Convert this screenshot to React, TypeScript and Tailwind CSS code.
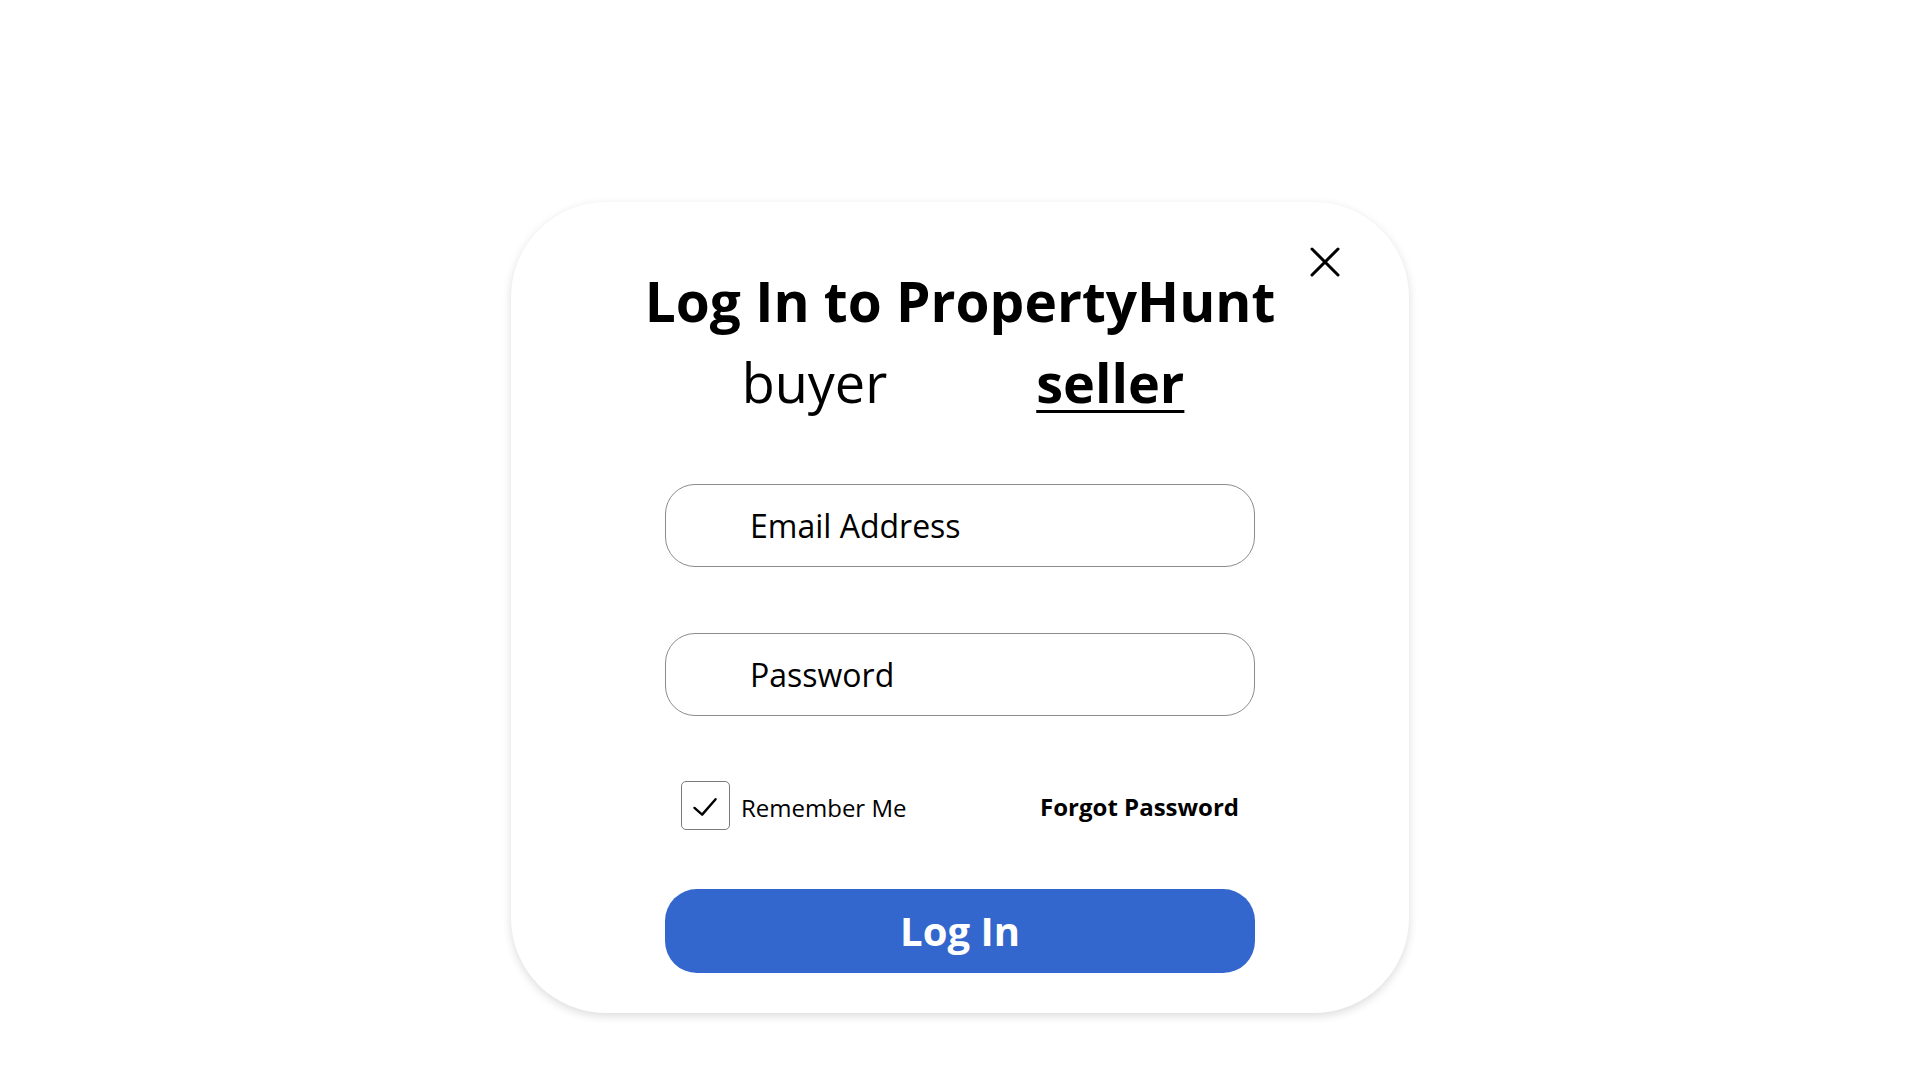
import React, { useState } from 'react'

const LoginCard = () => {
  const [role, setRole] = useState<'buyer' | 'seller'>('seller')
  const [remember, setRemember] = useState(true)

  return (
    <div className="relative w-[898px] rounded-[95px] bg-white pt-[61px] pb-[40px] shadow-[0_3px_10px_rgba(0,0,0,0.14)] flex flex-col items-center">
      {/* close */}
      <button className="absolute top-[45px] right-[69px] w-[30px] h-[30px]">
        <svg viewBox="0 0 30 30" className="w-[30px] h-[30px]" fill="none" stroke="black" strokeWidth="3" strokeLinecap="round">
          <path d="M2 2 L28 28 M28 2 L2 28" />
        </svg>
      </button>

      <h1 className="text-[55px] leading-[75px] font-bold text-black">Log In to PropertyHunt</h1>

      <div className="mt-[7px] ml-[6px] flex items-center gap-[149px] text-[54px] leading-[74px] text-black">
        <button onClick={() => setRole('buyer')} className={role === 'buyer' ? 'font-bold underline decoration-[3px] underline-offset-[7px]' : 'font-normal'}>buyer</button>
        <button onClick={() => setRole('seller')} className={role === 'seller' ? 'font-bold underline decoration-[3px] underline-offset-[7px]' : 'font-normal'}>seller</button>
      </div>

      <input
        type="email"
        placeholder="Email Address"
        className="mt-[65px] w-[590px] h-[83px] rounded-[30px] border border-[#8c8c8c] pl-[84px] text-[32px] text-black placeholder:text-black outline-none"
      />
      <input
        type="password"
        placeholder="Password"
        className="mt-[66px] w-[590px] h-[83px] rounded-[30px] border border-[#8c8c8c] pl-[84px] text-[32px] text-black placeholder:text-black outline-none"
      />

      <div className="mt-[65px] w-[590px] px-[16px] flex items-center justify-between">
        <label className="flex items-center gap-[11px] cursor-pointer">
          <span onClick={() => setRemember((x) => !x)} className="w-[49px] h-[49px] rounded-[5px] border border-[#7a7a7a] flex items-center justify-center">
            {remember && (
              <svg viewBox="0 0 49 49" className="w-[49px] h-[49px]" fill="none" stroke="black" strokeWidth="2.5" strokeLinecap="round" strokeLinejoin="round">
                <path d="M13 27 L21 34 L35 18" />
              </svg>
            )}
          </span>
          <span className="text-[24px] leading-[32px] pt-[4px] text-black">Remember Me</span>
        </label>
        <a className="text-[24px] leading-[32px] pt-[2px] font-bold text-black">Forgot Password</a>
      </div>

      <button className="mt-[59px] w-[590px] h-[84px] rounded-[32px] bg-[#3367cd] text-white text-[40px] font-bold">Log In</button>
    </div>
  )
}

export default function App() {
  return (
    <div className="min-h-screen w-full bg-white flex items-start justify-center pt-[202px] font-['Open_Sans',sans-serif]">
      <LoginCard />
    </div>
  )
}
